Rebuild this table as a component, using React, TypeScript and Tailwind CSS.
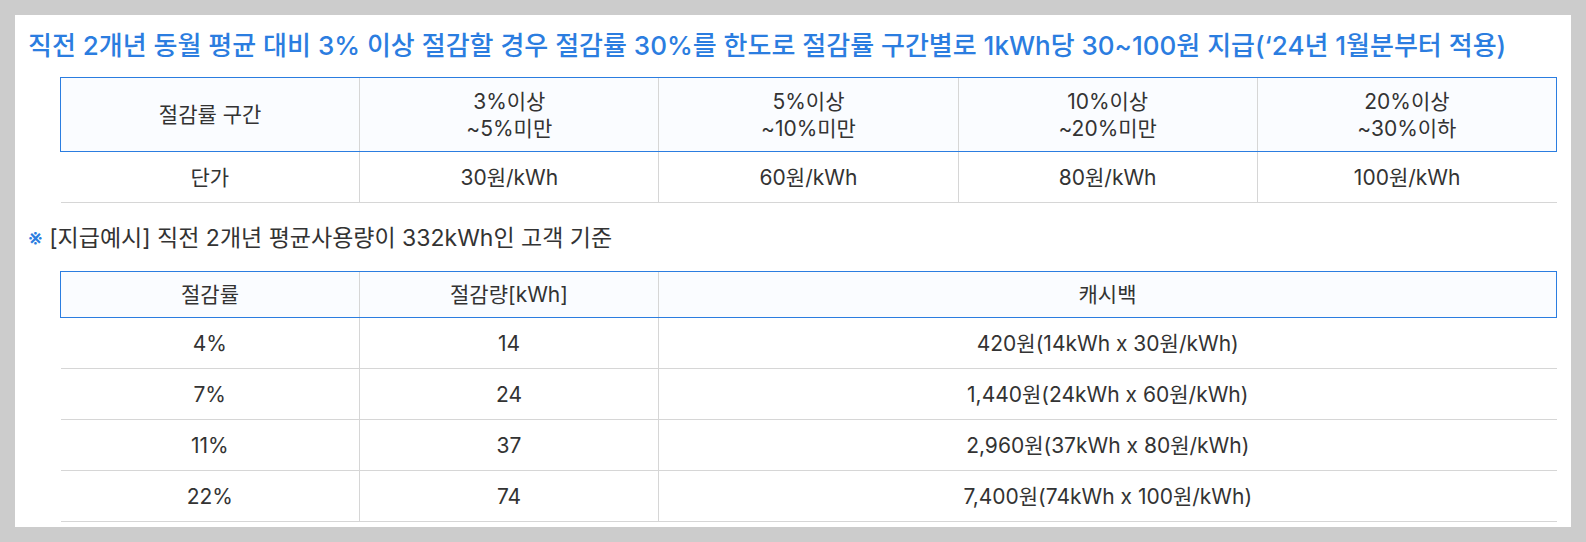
const FONT = 'font-["Inter","Noto_Sans_CJK_KR",sans-serif]';

const ranges = [
  ['3%이상', '~5%미만'],
  ['5%이상', '~10%미만'],
  ['10%이상', '~20%미만'],
  ['20%이상', '~30%이하'],
];
const prices = ['30원/kWh', '60원/kWh', '80원/kWh', '100원/kWh'];

const examples = [
  { rate: '4%', amount: '14', cash: '420원(14kWh x 30원/kWh)' },
  { rate: '7%', amount: '24', cash: '1,440원(24kWh x 60원/kWh)' },
  { rate: '11%', amount: '37', cash: '2,960원(37kWh x 80원/kWh)' },
  { rate: '22%', amount: '74', cash: '7,400원(74kWh x 100원/kWh)' },
];

const th = 'border-y border-[#2b7de0] bg-[#fafcff] font-normal';
const thInner = 'border-l border-l-[#d6d6d6]';
const td = 'border-b border-[#d6d6d6]';

export default function App() {
  return (
    <div className={`w-[1586px] h-[542px] bg-[#cccccc] p-[15px] ${FONT}`}>
      <div className="h-full bg-white pl-[13px] pr-[14px] pt-[14px] text-[#333333]">
        <h2 className="text-[26px] leading-[34px] font-medium text-[#2b7de0]">
          직전 2개년 동월 평균 대비 3% 이상 절감할 경우 절감률 30%를 한도로 절감률 구간별로 1kWh당 30~100원 지급(‘24년 1월분부터 적용)
        </h2>

        <table className="ml-[32px] mt-[14px] w-[1497px] table-fixed border-collapse text-center text-[21px] leading-[27px]">
          <thead>
            <tr>
              <th className={`${th} border-l border-l-[#2b7de0] h-[74px]`}>절감률 구간</th>
              {ranges.map(([a, b], i) => (
                <th
                  key={a}
                  className={`${th} ${thInner} ${i === ranges.length - 1 ? 'border-r border-r-[#2b7de0]' : ''}`}
                >
                  {a}
                  <br />
                  {b}
                </th>
              ))}
            </tr>
          </thead>
          <tbody>
            <tr>
              <td className={`${td} h-[51px]`}>단가</td>
              {prices.map((p) => (
                <td key={p} className={`${td} border-l border-l-[#d6d6d6]`}>
                  {p}
                </td>
              ))}
            </tr>
          </tbody>
        </table>

        <p className="mt-[20px] text-[23px] leading-[30px]">
          <span className="text-[#2b7de0]">※</span> [지급예시] 직전 2개년 평균사용량이 332kWh인 고객 기준
        </p>

        <table className="ml-[32px] mt-[18px] w-[1497px] table-fixed border-collapse text-center text-[21px] leading-[27px]">
          <colgroup>
            <col className="w-[299px]" />
            <col className="w-[299px]" />
            <col />
          </colgroup>
          <thead>
            <tr>
              <th className={`${th} border-l border-l-[#2b7de0] h-[46px]`}>절감률</th>
              <th className={`${th} ${thInner}`}>절감량[kWh]</th>
              <th className={`${th} ${thInner} border-r border-r-[#2b7de0]`}>캐시백</th>
            </tr>
          </thead>
          <tbody>
            {examples.map((r) => (
              <tr key={r.rate}>
                <td className={`${td} h-[51px]`}>{r.rate}</td>
                <td className={`${td} border-l border-l-[#d6d6d6]`}>{r.amount}</td>
                <td className={`${td} border-l border-l-[#d6d6d6]`}>{r.cash}</td>
              </tr>
            ))}
          </tbody>
        </table>
      </div>
    </div>
  );
}
